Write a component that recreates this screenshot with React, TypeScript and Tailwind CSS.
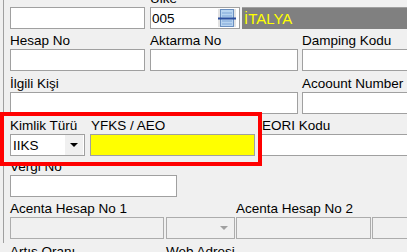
import React from 'react'

const Label: React.FC<{ children?: React.ReactNode; className?: string }> = ({ children, className = '' }) => (
  <div className={`h-[16px] leading-[15px] text-[13.5px] whitespace-nowrap ${className}`}>{children}</div>
)

const Box: React.FC<{ className?: string; children?: React.ReactNode }> = ({ className = '', children }) => (
  <div className={`h-[22px] shrink-0 border border-[#a0a0a0] ${className}`}>{children}</div>
)

const LookupIcon = () => (
  <svg width="18" height="20" viewBox="0 0 18 20">
    <rect x="2.5" y="1.5" width="13" height="17" fill="#b8d4f0" stroke="#6a8fc0" strokeWidth="1" />
    <line x1="4" y1="5" x2="14" y2="5" stroke="#7fa6d8" />
    <line x1="4" y1="8" x2="14" y2="8" stroke="#7fa6d8" />
    <line x1="4" y1="13" x2="14" y2="13" stroke="#7fa6d8" />
    <line x1="4" y1="16" x2="14" y2="16" stroke="#7fa6d8" />
    <rect x="0" y="9.5" width="18" height="2" fill="#2c4f9e" />
  </svg>
)

const App: React.FC = () => {
  return (
    <div className="relative w-[407px] h-[252px] overflow-hidden bg-[#f0f0f0] pl-[3px] font-['Liberation_Sans',Arial,sans-serif] text-black">
      <div className="h-full border-l border-[#a0a0a0] pl-[6px]">
        {/* Row 1 */}
        <div className="flex -mt-[9px]">
          <div>
            <Label />
            <Box className="w-[135px] bg-white" />
          </div>
          <div className="ml-[5px]">
            <Label>Ülke</Label>
            <div className="flex">
              <Box className="w-[90px] bg-white flex items-center justify-between pl-[1px] pr-[3px]">
                <span className="text-[13.5px] leading-[15px]">005</span>
                <div className="h-[18px] w-[18px] bg-[#e3e3e3] flex items-center justify-center">
                  <LookupIcon />
                </div>
              </Box>
              <div className="ml-[2px] h-[22px] w-[180px] shrink-0 bg-[#808080] border-t border-[#a0a0a0] flex items-center pl-[2px]">
                <span className="text-[15px] leading-[16px] text-[#ffff00]">İTALYA</span>
              </div>
            </div>
          </div>
        </div>

        {/* Row 2 */}
        <div className="flex mt-[4px]">
          <div>
            <Label>Hesap No</Label>
            <Box className="w-[135px] bg-white" />
          </div>
          <div className="ml-[5px]">
            <Label>Aktarma No</Label>
            <Box className="w-[148px] bg-white" />
          </div>
          <div className="ml-[4px]">
            <Label>Damping Kodu</Label>
            <Box className="w-[140px] bg-white" />
          </div>
        </div>

        {/* Row 3 */}
        <div className="flex mt-[5px]">
          <div>
            <Label>İlgili Kişi</Label>
            <Box className="w-[288px] bg-white" />
          </div>
          <div className="ml-[4px]">
            <Label>Acoount Number</Label>
            <Box className="w-[140px] bg-white" />
          </div>
        </div>

        {/* Row 4 */}
        <div className="flex mt-[4px]">
          <div>
            <Label>Kimlik Türü</Label>
            <Box className="w-[75px] bg-white flex items-center justify-between pl-[2px] pr-[1px]">
              <span className="text-[13.5px] leading-[15px]">IIKS</span>
              <div className="h-[20px] w-[18px] bg-[#f0f0f0] flex items-center justify-center">
                <div className="w-0 h-0 border-l-[4px] border-r-[4px] border-t-[4px] border-l-transparent border-r-transparent border-t-black" />
              </div>
            </Box>
          </div>
          <div className="ml-[5px]">
            <Label className="pl-[1px]">YFKS / AEO</Label>
            <Box className="w-[165px] bg-[#ffff00]" />
          </div>
          <div className="ml-[6px]">
            <Label className="pl-[1px]">EORI Kodu</Label>
            <Box className="w-[150px] bg-white" />
          </div>
        </div>

        {/* Row 5 */}
        <div className="flex mt-[3px]">
          <div>
            <Label>Vergi No</Label>
            <Box className="w-[167px] bg-white" />
          </div>
        </div>

        {/* Row 6 */}
        <div className="flex mt-[4px]">
          <div>
            <Label>Acenta Hesap No 1</Label>
            <div className="flex">
              <Box className="w-[154px] bg-[#f0f0f0] border-[#acacac]" />
              <Box className="ml-[2px] w-[69px] bg-[#f0f0f0] border-[#acacac] flex items-center justify-end pr-[6px]">
                <div className="w-0 h-0 border-l-[4px] border-r-[4px] border-t-[4px] border-l-transparent border-r-transparent border-t-[#a0a0a0]" />
              </Box>
            </div>
          </div>
          <div className="ml-[1px]">
            <Label>Acenta Hesap No 2</Label>
            <div className="flex">
              <Box className="w-[135px] bg-[#f0f0f0] border-[#acacac]" />
              <Box className="ml-[1px] w-[100px] bg-[#f0f0f0] border-[#acacac]" />
            </div>
          </div>
        </div>

        {/* Row 7 */}
        <div className="flex mt-[5px]">
          <Label className="w-[156px]">Artış Oranı</Label>
          <Label>Web Adresi</Label>
        </div>
      </div>

      {/* red highlight annotation */}
      <div className="absolute left-[0px] top-[112px] w-[262px] h-[54px] border-[4px] border-[#ff0000]" />
    </div>
  )
}

export default App
